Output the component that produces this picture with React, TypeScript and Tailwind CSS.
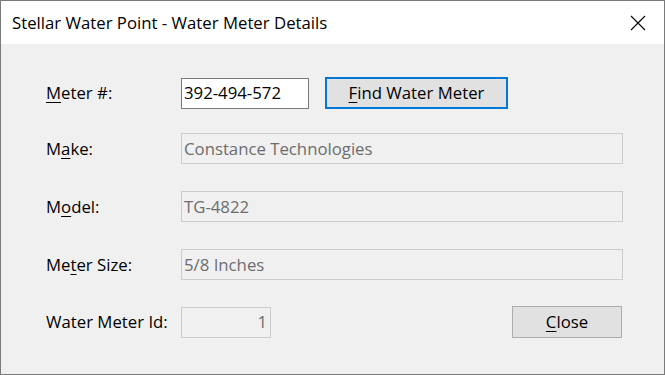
import type { ReactNode } from "react";

const font = { fontFamily: '"Open Sans", "Noto Sans", Arial, sans-serif' };

function Label({ children }: { children: ReactNode }) {
  return <div className="w-[135px] shrink-0 text-[16.75px] leading-[20px] text-black">{children}</div>;
}

function U({ children }: { children: ReactNode }) {
  return <span className="underline decoration-1 underline-offset-[3px]">{children}</span>;
}

function ReadOnlyBox({ value, width, right }: { value: string; width: string; right?: boolean }) {
  return (
    <div className={`flex h-[31px] items-center border border-[#cccccc] bg-[#f0f0f0] px-[2px] text-[16.75px] leading-[20px] text-[#6d6d6d] ${width} ${right ? "justify-end pr-[3px]" : ""}`}>
      {value}
    </div>
  );
}

export default function App() {
  return (
    <div style={font} className="flex h-[375px] w-[665px] flex-col border border-[#7a7a7a] bg-[#f0f0f0]">
      <div className="flex h-[43px] shrink-0 items-center justify-between bg-white pl-[11px] pr-[18px]">
        <span className="text-[16.75px] leading-[20px] text-black">Stellar Water Point - Water Meter Details</span>
        <svg width="16" height="16" viewBox="0 0 16 16" aria-hidden="true">
          <path d="M1 1 15 15M15 1 1 15" stroke="#000" strokeWidth="1.1" fill="none" />
        </svg>
      </div>

      <div className="flex flex-col pl-[45px]">
        <div className="mt-[33px] flex h-[32px] items-center">
          <Label>
            <U>M</U>eter #:
          </Label>
          <div className="flex h-[31px] w-[128px] items-center border border-[#7a7a7a] bg-white px-[2px] text-[16.75px] leading-[20px] text-black">
            392-494-572
          </div>
          <button type="button" className="ml-[16px] h-[32px] w-[183px] border-2 border-[#0078d7] bg-[#e1e1e1] text-[16.75px] leading-[20px] text-black">
            <U>F</U>ind Water Meter
          </button>
        </div>

        <div className="mt-[24px] flex items-center">
          <Label>
            M<U>a</U>ke:
          </Label>
          <ReadOnlyBox value="Constance Technologies" width="w-[442px]" />
        </div>

        <div className="mt-[27px] flex items-center">
          <Label>
            M<U>o</U>del:
          </Label>
          <ReadOnlyBox value="TG-4822" width="w-[442px]" />
        </div>

        <div className="mt-[27px] flex items-center">
          <Label>
            Me<U>t</U>er Size:
          </Label>
          <ReadOnlyBox value="5/8 Inches" width="w-[442px]" />
        </div>

        <div className="mt-[26px] flex h-[32px] items-center">
          <Label>Water Meter Id:</Label>
          <ReadOnlyBox value="1" width="w-[90px]" right />
          <button type="button" className="ml-[241px] h-[32px] w-[110px] border border-[#adadad] bg-[#e1e1e1] text-[16.75px] leading-[20px] text-black">
            <U>C</U>lose
          </button>
        </div>
      </div>
    </div>
  );
}
